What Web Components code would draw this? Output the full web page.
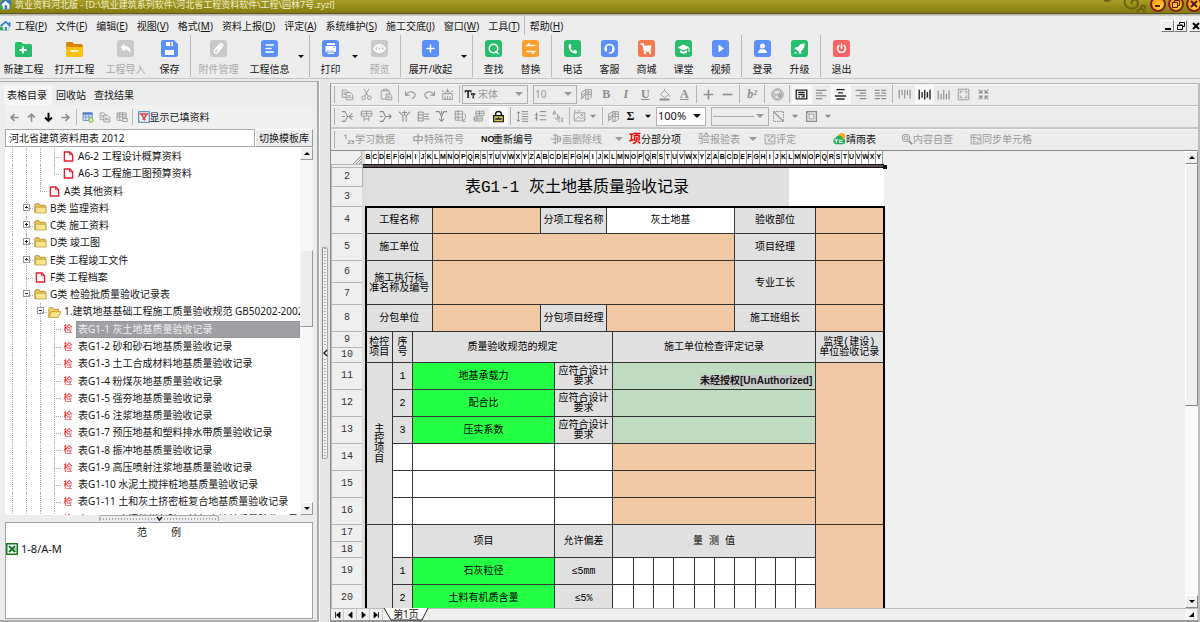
<!DOCTYPE html>
<html lang="zh-CN">
<head>
<meta charset="utf-8">
<title>筑业资料河北版</title>
<style>
html,body{height:100%}
body{margin:0;overflow:hidden;background:#ececec;color:#151515;font:10px/14px "Noto Sans","Noto Sans CJK SC",sans-serif}
</style>
</head>
<body>
<doc-app></doc-app>
<script>
const BASE = `*{box-sizing:border-box}button{font:inherit;color:inherit;border:0;background:none;padding:0;margin:0}svg{display:block}a{color:inherit;text-decoration:none}`;
function define(name, css, render) {
  customElements.define(name, class extends HTMLElement {
    constructor() { super(); this.attachShadow({mode: 'open'}); }
    connectedCallback() { this.shadowRoot.innerHTML = `<style>${BASE}${css}</style>` + render(this); }
  });
}

/* Small line icons, 16-unit grid */
const S = 'fill="none" stroke="currentColor"';
const GLYPH = {
  copy: `<g ${S}><path d="M1.5 2.5h5l2 2v7h-7z"/><path fill="#ececec" d="M6.5 5.5h5l3 3v6h-8z"/><path d="M3 6h3M3 8h3M8 9.500h4M8 11.500h5"/></g>`,
  cut: `<g ${S}><path d="M5 1l5 9M11 1l-5 9"/><circle cx="4.500" cy="12" r="2.300"/><circle cx="11.500" cy="12" r="2.300"/></g>`,
  paste: `<g ${S}><path d="M1.500 3.500h10v10h-10z"/><path d="M4 3.500v-2h5v2"/><path fill="#ececec" d="M7.500 7.500h5l2 2v5h-7z"/><path d="M9 10h3M9 12h4"/></g>`,
  undo: `<path ${S} stroke-width="1.300" d="M2 4v5h5M2.500 8.500c3-5 9-5 11-1c1 3-2 5-4 5"/>`,
  redo: `<path ${S} stroke-width="1.300" d="M14 4v5h-5M13.500 8.500c-3-5-9-5-11-1c-1 3 2 5 4 5"/>`,
  clear: `<g ${S} stroke="#555"><path d="M2 7h12v7h-12zM5 7l3-5 3 5M8 1v4M5 10v4M8 10v4M11 10v4M1 3l3 2M15 3l-3 2"/></g>`,
  brush: `<g ${S}><path d="M2 5l5-3v6l-5 4zM7 2h7v9l-3 3h-4v-6M7 5h7M7 8h7M10 2v12M2 9l5-3M1 14l4-3"/></g>`,
  fill: `<g ${S}><path d="M3 8l5-5 5 5-5 4zM8 3v-2M13 8c2 2 1 3 1 3"/><path stroke-width="2.500" d="M2 14.200h12"/></g>`,
  plus: `<path ${S} stroke-width="2" d="M8 2v12M2 8h12"/>`,
  minus: `<path ${S} stroke-width="2" d="M2 8h12"/>`,
  circled: `<g ${S}><circle cx="8" cy="8" r="7"/><circle cx="8" cy="8" r="5.500"/><path d="M5 6v5M8 6l-1 4M9 8h3v3h-3zM11 5l-1 6"/></g>`,
  wrap: `<g ${S} stroke-width="1.600"><path d="M1.500 2.500h13v11h-13z"/><path d="M4 5.500h8M4 8h7v3h-3M4 11h2"/></g>`,
  left: `<path ${S} stroke-width="1.400" d="M1 3h13M1 6.300h8M1 9.600h13M1 13h8"/>`,
  center: `<path ${S} stroke-width="1.700" d="M3 2h10M5 6h6M1 9.800h14M3 13.500h10"/>`,
  right: `<path ${S} stroke-width="1.400" d="M2 3h13M7 6.300h8M2 9.600h13M7 13h8"/>`,
  justify: `<path ${S} stroke-width="1.400" d="M1 3h6M9 3h6M1 6.300h6M9 6.300h6M1 9.600h14M1 13h6M9 13h6"/>`,
  vtop: `<path ${S} stroke-width="1.400" d="M1.500 2v11M5 2v7M8.300 2v11M11.600 2v7M14.800 2v11"/>`,
  vmid: `<path ${S} stroke-width="1.700" d="M1.500 2v12M5 5v7M8.300 2v12M11.600 5v7M14.800 2v12"/>`,
  vbot: `<path ${S} stroke-width="1.400" d="M1.500 3v11M5 7v7M8.300 2v12M11.600 7v7M14.800 3v11"/>`,
  expand: `<g ${S}><path d="M1.500 1.500h13v13h-13z"/><path d="M4 7v-3h3M9 4h3v3M12 9v3h-3M7 12h-3v-3"/></g>`,
  shrink: `<path ${S} stroke-width="1.300" d="M2 2l4 4M6 2v4h-4M14 2l-4 4M10 2v4h4M2 14l4-4M6 14v-4h-4M14 14l-4-4M10 14v-4h4"/>`,
  split1: `<path ${S} stroke-width="1.300" d="M1 2h4l3 6h7M1 14h4l3-6M1 8h4M14 4l-4 4 4 4"/>`,
  split2: `<path ${S} d="M1.500 1.500h13v6h-13zM8 1v6M1 4.500h13M5 8v6M11 8v6M5 11h6"/>`,
  split3: `<path ${S} stroke-width="1.300" d="M1 2h4l3 6h7M1 14h4l3-6M1 8h4M12 5l3 3-3 3"/>`,
  split4: `<path ${S} stroke-width="1.300" d="M1 2l5 5v7M15 2l-5 5v7M8 1v6M5 3h6"/>`,
  split5: `<path ${S} stroke-width="1.200" d="M1.500 2.500h6v11h-6zM1 6h6M1 10h6M9 5h6M9 11h6M9 8h5"/>`,
  split6: `<path ${S} stroke-width="1.300" d="M1 2h4l3 6 3-6h4M8 8v6M5 11l3 3 3-3M8 1v4"/>`,
  grid1: `<path ${S} d="M1.500 1.500h9v11h-9zM1 5h9M1 9h9M5 1v11M12 4c3 2 3 6 0 9M11 11v3h3"/>`,
  grid2: `<path ${S} d="M3.500 1.500h10v5h-10zM1.500 8.500h10v5h-10zM1 11h10M5 8v5M8 1v5M3 4h10"/>`,
  lock: `<path fill="none" stroke="#111" stroke-width="1.800" d="M4.500 7v-3c1-3 6-3 7 0v3"/><path fill="#d8c84c" stroke="#111" stroke-width="1.400" d="M2 7h12v7.500h-12z"/><path stroke="#223" stroke-width="2" d="M8 9v3M4 11h8"/>`,
  rows1: `<path ${S} stroke-width="1.200" d="M3 2v12M1 4l2-2 2 2M1 12l2 2 2-2M7 2h8M7 5h8M7 8h8M7 11h8M7 14h8"/>`,
  rows2: `<path ${S} stroke-width="1.200" d="M3 3v10M1 6h4M1 10h4M7 2h8M7 7h8M7 12h8"/>`,
  abc: `<path ${S} d="M1 6l2-5 2 5M2 4h2M7 5v6h2v-3h-2M14 10h-2v4h2M3 9l7 6"/>`,
  image: `<g ${S}><path d="M1.500 3.500h13v10h-13zM1 1h3M6 1h3"/><path d="M3 12l4-4 3 3 2-2 3 3"/><circle cx="11" cy="6.500" r="1"/></g>`,
  cross: `<path ${S} stroke-width="1.200" d="M2 14v-12h12M14 2v12h-12" stroke-dasharray="2 1"/><path ${S} stroke-width="1.600" d="M2 2l12 12"/>`,
  box: `<path ${S} stroke-width="1.600" d="M2 2h12v12h-12z"/><path ${S} d="M5 5h6v6h-6zM2 2l3 3"/>`,
  down: `<path fill="currentColor" d="M3 6h10l-5 5z"/>`,
  phi: `<path ${S} stroke-width="1.600" d="M8 1v14M2.500 5h11v5h-11z"/>`,
  strike: `<path ${S} stroke-width="1.200" d="M4 3h6v10h-6M7 1v14M1 8h14M10 5h4v6h-4"/>`,
  note: `<path ${S} stroke-width="1.200" d="M1.500 2.500h13v12h-13zM4 5h3M9 5h4M5 12l6-7M5 8l6 5M10 11h3"/>`,
  sun: `<circle cx="11" cy="5" r="4" fill="#f7a823"/><path fill="#27b35c" d="M4 14a4 4 0 0 1 0-7.500a4.500 4.500 0 0 1 8.500 1a3.300 3.300 0 0 1 0 6.500z"/><path fill="none" stroke="#fff" stroke-width="1.200" d="M3 9h4M5 9v3.500M12 9.500h-3v2.500h3"/>`,
  search: `<g ${S} stroke-width="1.300"><circle cx="6.500" cy="6.500" r="5"/><circle cx="6.500" cy="6.500" r="2.500"/><path stroke-width="2.500" d="M10 10l5 5"/></g>`,
  sync: `<path ${S} stroke-width="1.200" d="M1.500 2.500h13v12h-13zM1 6h8M5 2v12M7 9c2-4 5-2 6 0M13 6v3h-3M12 11c-2 3-5 1-5 0"/>`,
  aleft: `<path ${S} stroke-width="2.400" d="M14 8h-10M8 3l-5 5 5 5"/>`,
  aright: `<path ${S} stroke-width="2.400" d="M2 8h10M8 3l5 5-5 5"/>`,
  aup: `<path ${S} stroke-width="2.400" d="M8 14v-10M3 8l5-5 5 5"/>`,
  adown: `<path ${S} stroke-width="2.800" d="M8 1v12M3 8l5 5 5-5"/>`,
  tadd: `<path fill="#dfe9fa" stroke="#4472b8" d="M1.500 2.500h12v10h-12z"/><path fill="#4f80cc" d="M1 2h13v3h-13z"/><path stroke="#6a8fca" d="M1 8h13M5 5v8M9 5v8"/><circle cx="12" cy="12" r="3.500" fill="#8bc34a"/><path stroke="#fff" stroke-width="1.300" d="M12 10v4M10 12h4"/>`,
  tdel: `<path ${S} d="M1.500 2.500h12v10h-12zM1 5h13M1 8h13M5 2v10M9 2v10"/><path fill="#ececec" stroke="currentColor" d="M9 10h6v4h-6z"/>`,
  filter: `<path fill="#fff" stroke="#3c76bd" stroke-width="1.500" d="M1 1h14v14h-14z"/><path fill="none" stroke="#e33" stroke-width="1.700" d="M3.500 4h9l-3.500 4v4l-2-1v-3z"/>`,
  page: `<path fill="#fff" stroke="#e0202c" stroke-width="2" d="M2 1.500h8l4 4v9h-12z"/><path fill="none" stroke="#e0202c" stroke-width="1.300" d="M9.500 1.500v4h4"/>`,
  folder: `<path fill="#e8c552" stroke="#a5832a" d="M1 13v-9.500l1-1.500h4l1.500 2h6l1 1v8z"/><path fill="#fbe58c" stroke="#b08f35" stroke-width=".8" d="M2 6.500h12.500l.5 7h-13z"/>`,
  open: `<path fill="#f2d060" stroke="#b58f2a" d="M1 14v-10.500l1-1.500h4l1 2h6v3"/><path fill="#ffe88a" stroke="#b58f2a" d="M1 14l3-7h12l-3.500 7z"/>`,
  excel: `<path fill="#fff" stroke="#14781e" stroke-width="2" d="M1 1h14v14h-14z"/><path fill="none" stroke="#14781e" stroke-width="2.600" d="M4 4l8 8M12 4l-8 8"/><path stroke="#14781e" d="M10 8h4M10 11h4"/>`,
  house: `<path fill="#2b7bc4" d="M0 8l8-7 5 4v-2h2v4l1 2-2 .5-6-5-6 5z"/><path fill="#f4f9ff" stroke="#4c86b8" stroke-width=".7" d="M3 9l5-4.500 5 4.500v6h-10z"/><path fill="#35a853" d="M0 10c4-1 5 2 5 5h-5z"/><path fill="#3a7cc0" d="M7 10h3v5h-3z"/>`,
  tt: `<path fill="#111" d="M1 3h9v3h-1l-1-1.500h-1.500v7l1 1.500h-4l1-1.500v-7h-1.500l-1 1.500h-1z"/><path fill="#111" d="M9 7h6v2.500h-1v-1h-1v4l1 1h-3.500l1-1v-4h-1v1h-1z"/>`
};
const icon = (n, s = 13) => `<svg width="${s}" height="${s}" viewBox="0 0 16 16" aria-hidden="true">${GLYPH[n]}</svg>`;

/* Large coloured toolbar icons, 17-unit tiles */
const W = 'fill="none" stroke="#fff" stroke-width="1.500" stroke-linecap="round"';
const tile = (c, inner) => `<rect width="17" height="17" rx="3" fill="${c}"/>${inner}`;
const BLUE = '#5b8ff9', GREEN = '#28bd6c', GREY = '#c9c9c9';
const TILES = {
  neu: `<path fill="${GREEN}" d="M0 3.500q0-1.500 1.500-1.500h5l1.500 2h7.500q1.500 0 1.500 1.500v10q0 1.500-1.500 1.500h-14q-1.500 0-1.500-1.500z"/><path stroke="#fff" stroke-width="2" d="M8 6.500v7M4.500 10h7"/>`,
  open: `<path fill="#d98408" d="M0 3.500q0-1.500 1.500-1.500h5l1.500 2h7.500l1.500 1.500v4h-17z"/><path fill="#ffbf0b" d="M0 7h17v8.500q0 1.500-1.500 1.500h-14q-1.500 0-1.500-1.500z"/><path stroke="#fff" stroke-width="1.600" d="M4.500 11h8"/>`,
  imp: tile(GREY, `<path fill="#fff" d="M3.500 7.500l4-4v2.500c4 0 6 2 6 7c-1.500-2.500-3-3.500-6-3.500v2.500z"/>`),
  save: `<path fill="${BLUE}" d="M0 2q0-2 2-2h11l4 4v11q0 2-2 2h-13q-2 0-2-2z"/><path fill="#fff" d="M5 2h7v4h-7zM4 10h9v5h-9z"/><path fill="${BLUE}" d="M9 2.500h1.500v3h-1.500z"/>`,
  att: tile(GREY, `<path ${W} d="M5 10l5-6c2-1 4 1 2 3l-5 6c-2 1-4-1-2-3l4-4M8 10l3-4"/>`),
  info: tile(BLUE, `<path ${W} d="M5 5h7.500M5 8.500h5M5 12h7.500"/>`),
  print: tile(BLUE, `<path fill="#fff" d="M5 3h8v2h-8zM3.500 6h10.500v6h-2v2h-6.500v-2h-2z"/><path stroke="${BLUE}" stroke-width=".6" fill="none" d="M5.500 11h6v1.500h-6zM11 7.500h2"/>`),
  view: tile(GREY, `<path ${W} d="M3 8.500c3-5 8-5 11 0c-3 5-8 5-11 0z"/><circle cx="8.500" cy="8.500" r="1.900" ${W}/>`),
  plus: tile(BLUE, `<path ${W} d="M8.500 5v7M5 8.500h7"/>`),
  find: tile(GREEN, `<circle cx="8.500" cy="8.500" r="4.300" ${W}/><path ${W} d="M11 11.500l2 2"/>`),
  swap: tile('#ff9f2e', `<path ${W} d="M12.500 5.500h-7.500l2-1.800M5 11.500h7.500l-2 1.800"/>`),
  phone: tile(GREEN, `<path fill="#fff" d="M5 4l2 .5.500 2.500-1 1.200c.7 1.300 1.500 2 2.700 2.700l1.300-1 2.300.8.200 2.300c-1.500 1-3.500.5-5.500-1.200c-2-1.800-4-5-2.500-7.800z"/>`),
  serv: tile(BLUE, `<path ${W} d="M4.500 9.500v-2c1-4 7-4 8 0v2c0 2-1.500 3.500-4 3.500"/><path fill="#fff" d="M3.500 7.500h2.500v4h-1.500l-1-1zM11 7.500h2.500v3l-1 1h-1.500z"/>`),
  shop: tile('#f47a4d', `<path fill="#fff" d="M5.500 5.500h8l-1 5h-6z"/><path ${W} stroke-width="1.200" d="M3 4h2l1.500 7h6"/><circle cx="7" cy="13" r="1.200" fill="#fff"/><circle cx="12" cy="13" r="1.200" fill="#fff"/>`),
  cls: tile(GREEN, `<path fill="#fff" d="M2.500 7.500l6-3 6 3-6 3zM5 10l3.500 1.700 3.500-1.700v2.500c-2 1.500-5 1.500-7 0zM13.500 8h1v4h-1z"/>`),
  video: tile(BLUE, `<path fill="#fff" d="M6.500 4.500l5.500 4-5.500 4z"/>`),
  login: tile(BLUE, `<circle cx="8.500" cy="6" r="2.500" fill="#fff"/><path fill="#fff" d="M4 13c0-3 2-4 4-4l1 1 1-1c2 1 3 2 3 4z"/>`),
  up: tile(GREEN, `<path fill="#fff" d="M13.500 3.500c-3 0-5 1-6.500 3.500l-3 .5-.5 1.500 2.500 1 1.500 1.500 1 2.500 1.500-.5.5-3c2.500-2 3.500-4 3-7zM4 11.500l2 1.500-2.500 1z"/>`),
  exit: tile('#f76464', `<path ${W} d="M8.500 4v4.500M5.800 5.500c-3 3.500 0 7 2.700 7s5.700-3.500 2.700-7"/>`)
};

define('doc-app', `:host{display:flex;flex-direction:column;height:100vh;overflow:hidden}
.body{flex:1;display:flex;min-height:0}
side-panel{flex:none}sheet-pane{flex:1;min-width:0}`,
() => `<title-bar></title-bar><menu-bar></menu-bar><main-tools></main-tools>
<div class="body"><side-panel></side-panel><panel-splitter></panel-splitter><sheet-pane></sheet-pane></div>`);

define('title-bar', `:host{display:flex;align-items:flex-start;justify-content:space-between;height:16px;flex:none;overflow:hidden;background:linear-gradient(#a79d26,#857b0e 13px,#5e5832 13px,#5e5832 14px,#aaa79a 14px,#d8d8d4);color:#f3efd0;font-size:9px}
.name{display:flex;gap:3px;height:12px;line-height:10px;white-space:pre;margin-left:-1px}
.name svg{margin-top:-3px}
.r{display:flex;margin-right:-3px}
.r button{width:16px;height:16px;margin:-4px 1px 0;border-radius:8px;border:2px solid #8c1d0c;background:radial-gradient(circle at 8px 10px,#ffd83a,#f08a12);display:grid;place-items:center;flex:none}`,
() => `<div class="name">${icon('house', 13)}<span>筑业资料河北版 - [D:\\筑业建筑系列软件\\河北省工程资料软件\\工程\\园林7号.zyzl]</span></div>
<div class="r"><svg width="50" height="14" viewBox="0 0 50 14"><path fill="none" stroke="#6d6410" stroke-width="2" d="M5 0c3 2 6 0 7-1M26 0c-3 9 13 12 13 3c-1-6-8-3-6 1M38 12c2-4 6-4 8 0M42 8c0-4 5-3 4 1"/></svg>
<button aria-label="最小化"><svg width="8" height="8"><path stroke="#5c1508" stroke-width="2" d="M1 6h5"/></svg></button>
<button aria-label="还原"><svg width="8" height="8"><path fill="none" stroke="#5c1508" d="M2.500 2V.5h5v5H6M.5 2.500h5v5h-5z"/></svg></button>
<button aria-label="关闭"><svg width="8" height="8"><path stroke="#5c1508" stroke-width="2" d="M1 1l6 6M7 1L1 7"/></svg></button></div>`);

define('menu-bar', `:host{display:flex;align-items:center;height:19px;flex:none}
nav{display:flex;align-items:center;height:19px;flex:1;white-space:nowrap}
nav svg{margin-right:-1px}
nav a{padding:0 4px 0 5px}
i{width:1px;height:19px;background:#bcbcbc;margin:0}
button{width:13px;height:12px;border:1px solid;border-color:#fff #777 #777 #fff;background:#ececec;display:grid;place-items:center}
.w{display:flex;margin-right:-2px}.w button:last-child{margin-left:2px}`,
() => {
  const items = [['工程','P'],['文件','F'],['编辑','E'],['视图','V'],['格式','M'],['资料上报','D'],['评定','A'],['系统维护','S'],['施工交底','J'],['窗口','W'],['工具','T'],['帮助','H']];
  return `<nav>${icon('house', 11)}${items.map(([t, k]) => (k === 'H' ? '<i></i>' : '') + `<a href="#">${t}(<u>${k}</u>)</a>`).join('')}</nav>
<div class="w"><button aria-label="最小化文档"><svg width="8" height="8"><path stroke="#000" stroke-width="2" d="M1 7h6"/></svg></button><button aria-label="还原文档"><svg width="8" height="8"><path fill="none" stroke="#000" d="M2.500 2V.5h5v4H6M.5 3.500h5v4h-5zM.5 3h5"/></svg></button><button aria-label="关闭文档"><svg width="8" height="8"><path stroke="#000" stroke-width="2" d="M1 1l6 6M7 1L1 7"/></svg></button></div>`;
});

define('tool-button', `:host{display:block;width:37px}:host([wide]){width:51px}:host([wider]){width:55px}
button{display:flex;flex-direction:column;align-items:center;gap:5px;width:100%;white-space:nowrap}
:host([off]) button{color:#a9a9a9}`,
el => `<button ${el.hasAttribute('off') ? 'disabled' : ''}><svg width="17" height="17" viewBox="0 0 17 17">${TILES[el.getAttribute('icon')]}</svg><slot></slot></button>`);

define('main-tools', `:host{display:flex;height:44px;flex:none;padding-top:5px;margin-left:-2px;border-bottom:1px solid #c4c4c4}
i{width:1px;margin:-5px 2px 1px;background:#b9b9b9}
.dd{width:12px;display:grid;place-items:center;height:32px}.dd::after{content:"";border:3px solid transparent;border-top-color:#111;border-bottom:0}`,
() => {
  const b = (n, t, a = '') => `<tool-button icon="${n}" ${a}>${t}</tool-button>`, s = '<i></i>', d = '<button class="dd" aria-label="更多"></button>';
  return b('neu','新建工程','wide')+b('open','打开工程','wide')+b('imp','工程导入','wide off')+b('save','保存')+s+b('att','附件管理','wide off')+b('info','工程信息','wide')+d+s+b('print','打印')+d+b('view','预览','off')+s+b('plus','展开/收起','wider')+d+s+b('find','查找')+b('swap','替换')+s+b('phone','电话')+b('serv','客服')+b('shop','商城')+b('cls','课堂')+b('video','视频')+s+b('login','登录')+b('up','升级')+s+b('exit','退出');
});

define('side-panel', `:host{display:flex;flex-direction:column;width:319px;margin-top:2px;padding:3px 4px 1px 5px;border:solid #aaa;border-width:1px 2px 2px 0;background:#ececec}
.tabs{display:flex;height:20px;line-height:20px;flex:none}
.tabs button{padding:0 4px}
.tabs button:first-child{background:#f6f6f6;padding:0 5px 0 3px;margin-left:-1px}
.bar{display:flex;align-items:center;height:24px;flex:none;background:#f0f0f0;padding-left:1px}
.bar button{width:17px;display:grid;place-items:center;height:20px;color:#8e8e8e}
.bar .k{color:#000}
.bar i{width:1px;height:16px;background:#bbb;margin:0 2px}
.bar label{display:flex;align-items:center}
.bar label input{appearance:none;margin:0;width:0;height:0}
.row{display:flex;height:18px;flex:none}
.row input{flex:1;min-width:0;font:inherit;color:inherit;border:1px solid #a9a9a9;padding:0 3px;background:#fff;outline:0}
.row button{width:58px;border:1px solid;border-color:#fff #999 #999 #fff;white-space:nowrap}
.split{display:flex;justify-content:center;height:7px;flex:none}
.split button{display:flex;align-items:center;width:120px;height:6px;border:1px solid #a8a8a8;border-bottom:0;border-radius:3px 3px 0 0}
.split button::before,.split button::after{content:"";flex:1;height:2px;background:repeating-linear-gradient(90deg,#aaa 0 1px,transparent 1px 3px)}
.ex{height:97px;flex:none;border:1px solid #9fa3ae;background:#fff;padding:2px 1px}
.ex h2{margin:0;font-size:10px;font-weight:400;display:flex;justify-content:center;gap:24px}
.ex a{display:flex;align-items:center;gap:3px;margin:3px 0 0 -1px;font-size:11px}`,
() => `<div class="tabs" role="tablist"><button role="tab">表格目录</button><button role="tab">回收站</button><button role="tab">查找结果</button></div>
<div class="bar"><button aria-label="后退">${icon('aleft',11)}</button><button aria-label="上移">${icon('aup',11)}</button><button class="k" aria-label="下移">${icon('adown',11)}</button><button aria-label="前进">${icon('aright',11)}</button><i></i><button aria-label="添加表">${icon('tadd',12)}</button><button aria-label="复制表">${icon('copy',12)}</button><button aria-label="删除表">${icon('tdel',12)}</button><i></i><label><input type="checkbox">&nbsp;${icon('filter',12)}<span>显示已填资料</span></label></div>
<div class="row"><input aria-label="模板库" value="河北省建筑资料用表 2012"><button>切换模板库</button></div>
<doc-tree></doc-tree>
<div class="split"><button aria-label="折叠范例"><svg width="9" height="6"><path fill="none" stroke="#222" stroke-width="1.500" d="M2 1l2.500 3L7 1"/></svg></button></div>
<div class="ex"><h2><span>范</span><span>例</span></h2><a href="#">${icon('excel',12)}1-8/A-M</a></div>`);

define('doc-tree', `:host{display:flex;flex:1;min-height:0;overflow:hidden;background:#fff}
.view{flex:1;min-width:0;overflow:hidden}
ul{list-style:none;margin:0;padding:1px 0 0;height:381px;display:grid;grid-template-rows:repeat(22,minmax(0,1fr))}
li{display:flex;align-items:stretch;min-width:0;white-space:nowrap}
.g{width:14px;flex:none;position:relative}
.g::before{content:"";position:absolute;left:7px;top:0;bottom:0;border-left:1px dotted #aaa}
.l::before{bottom:50%}
.t::after,.l::after{content:"";position:absolute;left:7px;right:0;top:50%;border-top:1px dotted #aaa}
.x b{position:absolute;left:4px;top:4px;width:7px;height:7px;border:1px solid #999;background:#fff}
.x b::before{content:"";position:absolute;left:1px;top:2px;width:3px;height:1px;background:#222}
.plus b::after{content:"";position:absolute;left:2px;top:1px;width:1px;height:3px;background:#222}
.ic{width:14px;flex:none;display:grid;place-items:center;color:#f00000;font-size:9px}
a{flex:1;min-width:0;padding-left:2px;margin-left:1px;display:block;line-height:17px;overflow:hidden}
a.on{background:#a0a0a4;color:#eee;outline:1px dotted #888;outline-offset:-1px}
.sb{width:13px;flex:none;display:flex;flex-direction:column;justify-content:space-between;background:#f6f6f6;position:relative}
.sb button{height:13px;border:1px solid;border-color:#fff #999 #999 #fff;background:#f0f0f0;display:grid;place-items:center}
.sb .u::after{content:"";border:3px solid transparent;border-bottom-color:#000;border-top:0}
.sb .d::after{content:"";border:3px solid transparent;border-top-color:#000;border-bottom:0}
.th{position:absolute;left:0;right:0;top:28%;height:21%;background:#ececec;border:1px solid;border-color:#f6f6f6 #999 #999 #f6f6f6}`,
() => {
  const rows = [['vvvt','page','A6-2 工程设计概算资料'],['vvvl','page','A6-3 工程施工图预算资料'],['vvl','page','A类 其他资料'],['v+','folder','B类 监理资料'],['v+','folder','C类 施工资料'],['v+','folder','D类 竣工图'],['v+','folder','E类 工程竣工文件'],['vt','page','F类 工程档案'],['v-','folder','G类 检验批质量验收记录表'],['vv-','open','1.建筑地基基础工程施工质量验收规范 GB50202-2002']];
  ['1 灰土地基','2 砂和砂石地基','3 土工合成材料地基','4 粉煤灰地基','5 强夯地基','6 注浆地基','7 预压地基和塑料排水带','8 振冲地基','9 高压喷射注浆地基','10 水泥土搅拌桩地基','11 土和灰土挤密桩复合地基','12 水泥粉煤灰碎石桩复合地基'].forEach(t => rows.push(['vvvt', '', `表G1-${t}质量验收记录`]));
  const g = c => c === '+' ? '<span class="g x plus t"><b></b></span>' : c === '-' ? '<span class="g x t"><b></b></span>' : `<span class="g ${c}"></span>`;
  return `<div class="view"><ul>${rows.map(([s, i, t], n) => `<li>${[...s].map(g).join('')}<span class="ic">${i ? icon(i, i === 'page' ? 11 : 13) : '检'}</span><a href="#" class="${n === 10 ? 'on' : ''}">${t}</a></li>`).join('')}</ul></div>
<div class="sb"><button class="u" aria-label="向上滚动"></button><span class="th"></span><button class="d" aria-label="向下滚动"></button></div>`;
});

define('panel-splitter', `:host{display:flex;align-items:center;width:11px;flex:none;padding:24px 0 20px 2px;border-left:1px solid #f8f8f8;background:#e6e6e6}
button{width:6px;height:212px;border:1px solid #a8a8a8;border-left-color:#888;border-radius:0 3px 3px 0;display:flex;flex-direction:column;align-items:center;background:#f0f0f0}
button::before,button::after{content:"";flex:1;width:2px;background:repeating-linear-gradient(#aaa 0 1px,transparent 1px 3px)}`,
() => `<button aria-label="折叠目录"><svg width="5" height="12"><path fill="none" stroke="#111" stroke-width="1.300" d="M4 3L1 6l3 3"/></svg></button>`);

define('combo-box', `:host{display:flex;align-items:center;height:19px;border:1px solid #b0b0b0;background:#ececec;color:#999;padding:0 4px 0 1px;gap:2px}
:host([live]){background:#fff;color:#111;font-size:11px}
select{appearance:none;flex:1;min-width:0;border:0;background:none;font:inherit;color:inherit;opacity:1;padding:0;margin:0;outline:0}
hr{flex:1;border:0;border-top:1px solid #aaa;margin:0}
:host::after{content:"";border:4px solid transparent;border-top-color:currentColor;border-bottom:0}`,
el => (el.hasAttribute('tt') ? icon('tt', 12) : '') + (el.hasAttribute('line') ? '<hr>' : `<select aria-label="${el.getAttribute('label')}"><option>${el.getAttribute('value')}</option></select>`));

define('tool-group', `:host{display:flex;flex:none;height:19px}
button{flex:1;min-width:0;display:grid;place-items:center;color:#8c8c8c;font:bold 12px/18px "Liberation Serif",serif}
.on{background:#f8f8f8;color:#222}.k{color:#111}`,
el => el.getAttribute('items').split(' ').map(n => {
  const m = n.match(/^([*!]?)(.+)$/), c = m[1] === '*' ? 'on' : m[1] === '!' ? 'k' : '', v = m[2];
  const txt = {B: 'B', I: '<em>I</em>', U: '<u>U</u>', A: '<u>A</u>', b2: '<em>b²</em>', sum: 'Σ'}[v];
  return `<button class="${c}" aria-label="${v}">${txt || icon(v, v === 'down' ? 10 : 13)}</button>`;
}).join(''));

define('sheet-pane', `:host{display:flex;flex-direction:column;border-left:1px solid #8f8f8f;border-right:2px solid #bdbdbd;margin-top:4px;background:#ececec;border-top:1px solid #b5b5b5;min-height:0}
.bar{display:flex;align-items:center;height:22px;flex:none;padding:0 0 2px 3px;border-bottom:1px solid #bdbdbd;border-top:1px solid #f8f8f8;white-space:nowrap}
.bar::before{content:"";width:1px;height:17px;background:#aaa;margin-right:3px}
.b2{height:23px;border-bottom:2px solid #c6c6c6}
.b3{height:22px;border-bottom:1px solid #888}
.bar i{width:1px;height:18px;background:#b5b5b5;margin:0 2px;flex:none}
.bar>*{flex:none}
.lb{display:flex;align-items:center;color:#9b9b9b}
.lb>span:first-child,.lb>svg{width:12px;flex:none}
.lb>svg:first-child[width="14"]{width:14px}
.lb.on{color:#111}
.ws{width:17px}
.dd{width:8px;display:grid;place-items:center}.dd::after{content:"";border:4px solid transparent;border-top-color:#999;border-bottom:0}
.sub{font-size:10px;color:#777}.lb>.no{font:bold 9px/14px "Liberation Sans",sans-serif;width:14px}.xiang{font-size:12px;font-weight:700;color:#f00000}.yan{font-size:12px}
.c1{width:66px}.c2{width:44px;margin:0 0 0 5px}.c3{width:50px}.c4{width:58px;margin:0 1px 0 5px}
.g58{width:58px}.g56{width:56px}.g117{width:117px}.g38{width:38px}.g20{width:20px}.g98{width:98px}.g170{width:170px}.g54{width:54px}.g28{width:28px}.g51{width:51px}.g66{width:66px}
.work{flex:1;display:flex;min-height:0}
.sheet{flex:1;min-width:0;display:flex;flex-direction:column;overflow:hidden;background:#efefef}
.vs{width:13px;flex:none;display:flex;flex-direction:column;justify-content:space-between;background:#f9f9f9}
.vs button{height:13px;flex:none;border:1px solid;border-color:#fff #888 #888 #fff;background:#f0f0f0;display:grid;place-items:center}
.vs .u::after{content:"";border:3px solid transparent;border-bottom-color:#000;border-top:0}
.vs .d::after{content:"";border:3px solid transparent;border-top-color:#000;border-bottom:0}
.vs span{flex:0 1 53%;margin-bottom:auto;background:#f0f0f0;border:1px solid;border-color:#fff #888 #888 #fff}
.foot{display:flex;height:14px;flex:none;border-top:1px solid #bbb;border-bottom:2px solid #999;background:#efefef}
.foot button{width:13px;display:grid;place-items:center;border-right:1px solid #ccc}
.foot .tab{width:46px;display:block;border:0;position:relative}
.foot .tab svg{position:absolute;left:0;top:-1px}.foot .tab span{position:relative;line-height:11px;display:block}
.foot .sz{margin-left:auto;background:#f6f6f6}`,
() => {
  const g = (w, items) => `<tool-group class="g${w}" items="${items}"></tool-group>`, s = '<i></i>';
  const lb = (ic, t, on = '') => `<button class="lb ${on}">${ic}<span>${t}</span></button>`;
  const ws = '<span class="ws"></span>', dd = '<button class="dd" aria-label="更多"></button>';
  const sp = n => `<span style="width:${n}px"></span>`;
  return `<div class="bar">${g(58,'copy cut paste')}${s}${g(56,'undo redo clear')}${s}<combo-box class="c1" tt label="字体" value="宋体"></combo-box><combo-box class="c2" label="字号" value="10"></combo-box>${g(117,'brush B I U fill A')}${s}${g(38,'plus minus')}${s}${g(20,'b2')}${s}${g(20,'circled')}${s}${g(98,'*wrap left *center right justify')}${s}${g(98,'vtop *vmid vbot expand shrink')}</div>
<div class="bar b2">${g(170,'split1 split2 split3 split4 split5 split6 grid1 grid2 *lock')}${s}${g(54,'rows1 rows2 abc')}${s}${g(28,'image down')}${s}${g(51,'brush !sum !down')}<combo-box class="c3" live label="缩放" value="100%"></combo-box><combo-box class="c4" line></combo-box>${g(66,'cross down box down')}</div>
<div class="bar b3">${sp(5)}${lb('<span class="sub">¹₂₃</span>','学习数据')}${ws}${lb(icon('phi',12),'特殊符号')}${ws}${lb('<span class="no">NO</span>','重新编号','on')}${ws}${lb(icon('strike',12),'画删除线')}${sp(13)}${dd}${sp(6)}${lb('<span class="xiang">项</span>','分部分项','on')}${ws}${lb('<span class="yan">验</span>','报验表')}${sp(9)}${dd}${sp(7)}${lb(icon('note',12),'评定')}${sp(36)}${lb(icon('sun',14),'晴雨表','on')}${sp(25)}${lb(icon('search',12),'内容自查')}${ws}${lb(icon('sync',12),'同步单元格')}</div>
<div class="work"><div class="sheet"><column-heads></column-heads><sheet-grid></sheet-grid></div>
<div class="vs"><button class="u" aria-label="向上滚动"></button><span></span><button class="d" aria-label="向下滚动"></button></div></div>
<div class="foot">${['M2.500 1v6M7 1v6L3.500 4z','M6 1v6L2.500 4z','M3 1v6l3.500-3z','M6.500 1v6M2 1v6l3.500-3z'].map((d, n) => `<button aria-label="${['首页','上一页','下一页','末页'][n]}"><svg width="9" height="8"><path fill="#000" stroke="#000" stroke-width=".8" d="${d}"/></svg></button>`).join('')}<button class="tab"><svg width="46" height="13"><path fill="#fff" stroke="#222" d="M1 0l7 12h31l6-12"/></svg><span>第1页</span></button><button class="sz" aria-label="调整大小"><svg width="7" height="7"><path d="M6 1v5h-5z"/></svg></button></div>`;
});

define('column-heads', `:host{display:flex;height:13px;flex:none;font:bold 7px/12px "Liberation Sans",sans-serif;width:552px;background:#fff;color:#000}
.c{width:31px;flex:none;background:#efefef;border-right:1px solid #bbb;display:flex;justify-content:flex-end;align-items:flex-end}
.s{width:3px;flex:none;background:#ddd}
b{flex:1 1 0;min-width:0;text-align:center;border-right:1px solid #999}`,
() => {
  let out = '';
  for (let n = 1; n < 77; n++) out += `<b>${String.fromCharCode(65 + n % 26)}</b>`;
  return `<span class="c"><svg width="9" height="9"><path stroke="#888" d="M1 9L9 1M4 9l5-5M7 9l2-2"/></svg></span><span class="s"></span>${out}`;
});

define('sheet-grid', `:host{display:block;flex:1;min-height:0;overflow:hidden;position:relative}
table{border-collapse:collapse;table-layout:fixed;width:552px;font:10px/10px "Liberation Mono","Noto Sans CJK SC",monospace;color:#000}
td,th{padding:2px 0 0;text-align:center;vertical-align:middle;border:1px solid #333;background:#e0e0e0;font-weight:400;white-space:nowrap}
th{padding:0;background:#efefef;border-color:#b5b5b5;font-family:"Liberation Mono",monospace;color:#333}
.gut{border-color:#ddd;background:#ddd}
.o{background:#f0c8a4}.w{background:#fff}.g{background:#22ff44}.l{background:#c0dcc0}
.title{font-size:16px;line-height:20px;border-color:#e0e0e0}
.tw{background:#fff;border-color:#fff}
.sel{padding:0;background:#5a5058;border-color:#111}
.top td{border-top:2px solid #000}
.lf{border-left:2px solid #000}.rt{border-right:2px solid #000}
.msg{position:absolute;left:369px;top:211px;background:#c8c8c8;font:bold 10px/12px "Liberation Sans","Noto Sans CJK SC",sans-serif;white-space:nowrap}
.h{position:absolute;left:552px;top:1px;width:4px;height:4px;background:#111}`,
() => {
  const cols = [31,3,27,20,20,108,14,52,6,21,20,20,21,20,20,21,20,13,7,20,68];
  const td = (t, cs = 1, c = '', rs = 1) => `<td colspan="${cs}" rowspan="${rs}" class="${c}">${t}</td>`;
  const tr = (n, h, cells, cls = '') => `<tr style="height:${h}px" class="${cls}"><th scope="row">${n}</th>${cells}</tr>`;
  const item = (n, name, std, pre = '', post = '') => pre + td(n) + td(name, 3, 'g') + td(std, 2) + td('', 11, 'l') + post;
  const blank = td('', 1, 'w') + td('', 3, 'w') + td('', 2, 'w') + td('', 11, 'o');
  const measures = Array.from({length: 10}, (_, i) => td('', i === 8 ? 2 : 1, 'w')).join('');
  const std = '应符合设计<br>要求';
  return `<table><colgroup>${cols.map(w => `<col style="width:${w}px">`).join('')}</colgroup><tbody>
${tr('', 3, td('', 20, 'sel'))}
${tr(2, 19, td('', 1, 'gut', 19) + td('表G1-1 灰土地基质量验收记录', 16, 'title', 2) + td('', 3, 'tw', 2))}
${tr(3, 20, '')}
${tr(4, 27, td('工程名称', 3, 'lf') + td('', 1, 'o') + td('分项工程名称', 2) + td('灰土地基', 7, 'w') + td('验收部位', 5) + td('', 1, 'o rt'), 'top')}
${tr(5, 27, td('施工单位', 3, 'lf') + td('', 10, 'o') + td('项目经理', 5) + td('', 1, 'o rt'))}
${tr(6, 22, td('施工执行标<br>准名称及编号', 3, 'lf', 2) + td('', 10, 'o', 2) + td('专业工长', 5, '', 2) + td('', 1, 'o rt', 2))}
${tr(7, 22, '')}
${tr(8, 27, td('分包单位', 3, 'lf') + td('', 1, 'o') + td('分包项目经理', 2) + td('', 7, 'o') + td('施工班组长', 5) + td('', 1, 'o rt'))}
${tr(9, 16, td('检控<br>项目', 1, 'lf', 2) + td('序<br>号', 1, '', 2) + td('质量验收规范的规定', 5, '', 2) + td('施工单位检查评定记录', 11, '', 2) + td('监理(建设)<br>单位验收记录', 1, 'rt', 2))}
${tr(10, 15, '')}
${tr(11, 27, item(1, '地基承载力', std, td('主<br>控<br>项<br>目', 1, 'lf', 6), td('', 1, 'o rt', 6)))}
${tr(12, 27, item(2, '配合比', std))}
${tr(13, 27, item(3, '压实系数', std))}
${tr(14, 27, blank)}${tr(15, 27, blank)}${tr(16, 27, blank)}
${tr(17, 17, td('', 1, 'lf', 4) + td('', 1, 'w', 2) + td('项目', 3, '', 2) + td('允许偏差', 2, '', 2) + td('量&nbsp;测&nbsp;值', 11, '', 2) + td('', 1, 'o rt', 4))}
${tr(18, 16, '')}
${tr(19, 27, td(1) + td('石灰粒径', 3, 'g') + td('≤5mm', 2) + measures)}
${tr(20, 27, td(2) + td('土料有机质含量', 3, 'g') + td('≤5%', 2) + measures)}
</tbody></table><span class="h"></span><span class="msg">未经授权[UnAuthorized]</span>`;
});
</script>
</body>
</html>
